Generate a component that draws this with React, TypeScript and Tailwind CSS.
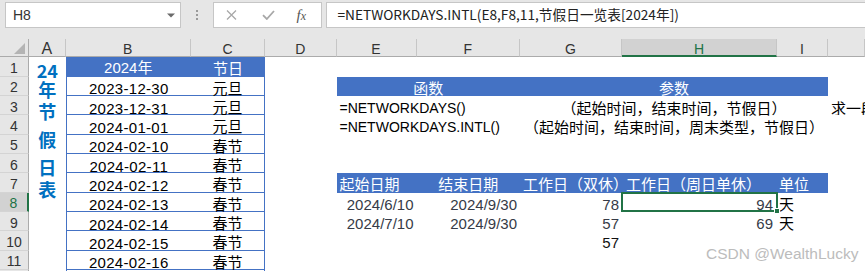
import React from "react";

const num = "font-['Liberation_Sans','Noto_Sans_CJK_SC',sans-serif] text-[15px] leading-none";
const cjk = "font-['Noto_Sans_CJK_SC',sans-serif] text-[15px] leading-none";

const holidays: [string, string][] = [
    ["2023-12-30", "元旦"],
    ["2023-12-31", "元旦"],
    ["2024-01-01", "元旦"],
    ["2024-02-10", "春节"],
    ["2024-02-11", "春节"],
    ["2024-02-12", "春节"],
    ["2024-02-13", "春节"],
    ["2024-02-14", "春节"],
    ["2024-02-15", "春节"],
    ["2024-02-16", "春节"],
    ["", ""],
];

const rowNums = [1, 2, 3, 4, 5, 6, 7, 8, 9, 10, 11, 12];

function Cell({ w, className = "", children }: { w: string; className?: string; children?: React.ReactNode }) {
    return (
        <div className={`${w} shrink-0 h-full flex items-center whitespace-nowrap overflow-visible ${className}`}>
            {children}
        </div>
    );
}

function ColHead({ w, label, active = false }: { w: string; label: string; active?: boolean }) {
    return (
        <div
            className={
                active
                    ? `${w} shrink-0 h-full flex items-center justify-center pt-[3px] bg-[#d2d2d2] border-r border-r-[#c6c6c6] border-b-2 border-b-[#217346] text-[#217346]`
                    : `${w} shrink-0 h-full flex items-center justify-center pt-[3px] border-r border-r-[#c6c6c6] border-b border-b-[#ababab] text-[#333]`
            }
        >
            {label}
        </div>
    );
}

function Toolbar() {
    return (
        <div className="h-[39px] bg-[#e6e6e6] pt-[2px] flex items-start">
            {/* name box */}
            <div className="ml-[5px] w-[176px] h-[26px] bg-white border border-[#c6c6c6] flex items-center justify-between pl-[7px] pr-[5px]">
                <span className="font-['Liberation_Sans',sans-serif] text-[14px] text-[#333] pt-[1px]">H8</span>
                <svg width="8" height="5" viewBox="0 0 8 5">
                    <path d="M0 0.5h8L4 4.5z" fill="#6b6b6b" />
                </svg>
            </div>
            <div className="w-[31.5px] h-[26px] flex flex-col items-center justify-center gap-[2px]">
                <span className="w-[2px] h-[2px] bg-[#9a9a9a]" />
                <span className="w-[2px] h-[2px] bg-[#9a9a9a]" />
                <span className="w-[2px] h-[2px] bg-[#9a9a9a]" />
            </div>
            {/* cancel / enter / fx */}
            <div className="w-[109px] h-[26px] bg-white border border-[#c6c6c6] flex items-center pl-[12px]">
                <svg width="11" height="10" viewBox="0 0 11 10">
                    <path d="M1 0.5l9 9M10 0.5l-9 9" stroke="#a8a8a8" strokeWidth="1.3" />
                </svg>
                <svg width="13" height="10" viewBox="0 0 13 10" className="ml-[25px]">
                    <path d="M1 5.2l3.8 3.8L12 1" stroke="#a8a8a8" strokeWidth="1.8" fill="none" />
                </svg>
                <span className="ml-[22px] italic font-['Liberation_Serif',serif] text-[15px] text-[#555] leading-none">
                    f<span className="text-[12px]">x</span>
                </span>
            </div>
            {/* formula */}
            <div className="ml-[4px] flex-1 h-[26px] bg-white border border-r-0 border-[#c6c6c6] pl-[11px] flex items-center">
                <span className="font-['Noto_Sans_CJK_SC',sans-serif] text-[13.7px] leading-none text-[#222] whitespace-nowrap">
                    =NETWORKDAYS.INTL(E8,F8,11,节假日一览表[2024年])
                </span>
            </div>
        </div>
    );
}

function RightPart({ r }: { r: number }) {
    const d = <Cell w="w-[71.5px]" />;
    if (r === 2) {
        return (
            <>
                {d}
                <Cell w="w-[183.5px]" className={`${cjk} bg-[#4472c4] text-white justify-center pt-[2px]`}>函数</Cell>
                <Cell w="w-[308px]" className={`${cjk} bg-[#4472c4] text-white justify-center pt-[2px]`}>参数</Cell>
            </>
        );
    }
    if (r === 3 || r === 4) {
        return (
            <>
                {d}
                <Cell w="w-[183.5px]" className="font-['Liberation_Sans',sans-serif] text-[14px] leading-none pl-[3px] pt-[5px] text-black">
                    {r === 3 ? "=NETWORKDAYS()" : "=NETWORKDAYS.INTL()"}
                </Cell>
                <Cell w="w-[308px]" className={`${cjk} justify-center pt-[3px] text-black`}>
                    {r === 3 ? "（起始时间，结束时间，节假日）" : "（起始时间，结束时间，周末类型，节假日）"}
                </Cell>
                {r === 3 && (
                    <div className={`flex-1 min-w-0 h-full flex items-center pl-[3px] pt-[3px] whitespace-nowrap overflow-hidden ${cjk} text-black`}>
                        求一段时间内的工作日天数
                    </div>
                )}
            </>
        );
    }
    if (r === 7) {
        return (
            <>
                {d}
                <Cell w="w-[80px]" className={`${cjk} bg-[#4472c4] text-white pl-[3px] pt-[1px]`}>起始日期</Cell>
                <Cell w="w-[103.5px]" className={`${cjk} bg-[#4472c4] text-white justify-center pt-[1px]`}>结束日期</Cell>
                <Cell w="w-[102px]" className={`${cjk} bg-[#4472c4] text-white pl-[3px] pt-[1px] overflow-hidden`}>工作日（双休）</Cell>
                <Cell w="w-[155px]" className={`${cjk} bg-[#4472c4] text-white pl-[4px] pt-[1px]`}>工作日（周日单休）</Cell>
                <Cell w="w-[51px]" className={`${cjk} bg-[#4472c4] text-white pl-[2px] pt-[1px]`}>单位</Cell>
            </>
        );
    }
    if (r === 8 || r === 9) {
        return (
            <>
                {d}
                <Cell w="w-[80px]" className={`${num} justify-end pr-[3px] pt-[4px] text-[#363b47]`}>
                    {r === 8 ? "2024/6/10" : "2024/7/10"}
                </Cell>
                <Cell w="w-[103.5px]" className={`${num} justify-end pr-[3px] pt-[4px] text-[#363b47]`}>2024/9/30</Cell>
                <Cell w="w-[102px]" className={`${num} justify-end pr-[3px] pt-[4px] text-[#363b47]`}>{r === 8 ? "78" : "57"}</Cell>
                <Cell w="w-[155px]" className={`${num} justify-end pr-[4px] pt-[4px] text-[#363b47] relative`}>
                    {r === 8 ? "94" : "69"}
                    {r === 8 && (
                        <>
                            <span className="absolute -left-[1px] -top-[1px] -right-[1px] -bottom-[0px] border-2 border-[#217346]" />
                            <span className="absolute -right-[3px] -bottom-[2px] w-[6px] h-[6px] bg-[#217346] border border-white" />
                        </>
                    )}
                </Cell>
                <Cell w="w-[51px]" className={`${cjk} pl-[2px] pt-[2px] text-black`}>天</Cell>
            </>
        );
    }
    if (r === 10) {
        return (
            <>
                {d}
                <Cell w="w-[80px]" />
                <Cell w="w-[103.5px]" />
                <Cell w="w-[102px]" className={`${num} justify-end pr-[3px] pt-[4px] text-[#111]`}>57</Cell>
            </>
        );
    }
    return d;
}

export default function App() {
    return (
        <div className="relative w-[865px] h-[271px] overflow-hidden bg-white font-['Liberation_Sans',sans-serif]">
            <Toolbar />

            <div className="flex">
                {/* row headers */}
                <div className="w-[29px] shrink-0 flex flex-col bg-[#e6e6e6]">
                    <div className="h-[18.33px] shrink-0 border-r border-r-[#ababab] border-b border-b-[#ababab] flex items-end justify-end pr-[3px] pb-[2px]">
                        <svg width="11" height="11" viewBox="0 0 11 11">
                            <path d="M11 0V11H0z" fill="#b4b4b4" />
                        </svg>
                    </div>
                    {rowNums.map((n) => (
                        <div
                            key={n}
                            className={
                                n === 8
                                    ? "h-[19.33px] shrink-0 flex items-center justify-center pt-[3px] text-[14px] leading-none bg-[#d2d2d2] text-[#217346] border-b border-b-[#d4d4d4] border-r-2 border-r-[#217346]"
                                    : "h-[19.33px] shrink-0 flex items-center justify-center pt-[3px] text-[14px] leading-none text-[#333] border-b border-b-[#d4d4d4] border-r border-r-[#ababab]"
                            }
                        >
                            {n}
                        </div>
                    ))}
                </div>

                {/* column A with the merged title */}
                <div className="w-[36.5px] shrink-0 flex flex-col">
                    <div className="h-[18.33px] shrink-0 bg-[#e6e6e6]">
                        <ColHead w="w-full" label="A" />
                    </div>
                    <div className="flex flex-col items-center font-['Noto_Sans_CJK_SC',sans-serif] font-bold text-[18px] leading-[19px] text-[#0070c0]">
                        <span className="mt-[4px]">24</span>
                        <span>年</span>
                        <span className="mt-[3px]">节</span>
                        <span className="mt-[9px]">假</span>
                        <span className="mt-[9px]">日</span>
                        <span className="mt-[3px]">表</span>
                    </div>
                </div>

                {/* columns B onwards */}
                <div className="flex-1 min-w-0 flex flex-col">
                    <div className="h-[18.33px] shrink-0 flex bg-[#e6e6e6] text-[14px] leading-none">
                        <ColHead w="w-[125.5px]" label="B" />
                        <ColHead w="w-[74px]" label="C" />
                        <ColHead w="w-[71.5px]" label="D" />
                        <ColHead w="w-[80px]" label="E" />
                        <ColHead w="w-[103.5px]" label="F" />
                        <ColHead w="w-[102px]" label="G" />
                        <ColHead w="w-[155px]" label="H" active />
                        <ColHead w="w-[51px]" label="I" />
                        <ColHead w="flex-1" label="" />
                    </div>

                    {rowNums.map((r) => (
                        <div key={r} className="h-[19.33px] shrink-0 flex">
                            {r === 1 ? (
                                <>
                                    <Cell w="w-[125.5px]" className={`${num} bg-[#4472c4] text-white justify-center pt-[2px]`}>2024年</Cell>
                                    <Cell w="w-[74px]" className={`${cjk} bg-[#4472c4] text-white justify-center pt-[1px]`}>节日</Cell>
                                </>
                            ) : (
                                <>
                                    <Cell w="w-[125.5px]" className={`${num} tracking-[0.3px] justify-center pt-[6px] border-l border-b border-[#4472c4] text-black`}>
                                        {holidays[r - 2][0]}
                                    </Cell>
                                    <Cell w="w-[74px]" className={`${cjk} justify-center pt-[3px] border-r border-b border-[#4472c4] text-black`}>
                                        {holidays[r - 2][1]}
                                    </Cell>
                                </>
                            )}
                            <RightPart r={r} />
                        </div>
                    ))}
                </div>
            </div>

            {/* watermark */}
            <span className="absolute left-[706px] top-[246px] font-['Liberation_Sans',sans-serif] text-[15.5px] leading-none text-[#bcbcbc] whitespace-nowrap">
                CSDN @WealthLucky
            </span>
        </div>
    );
}
